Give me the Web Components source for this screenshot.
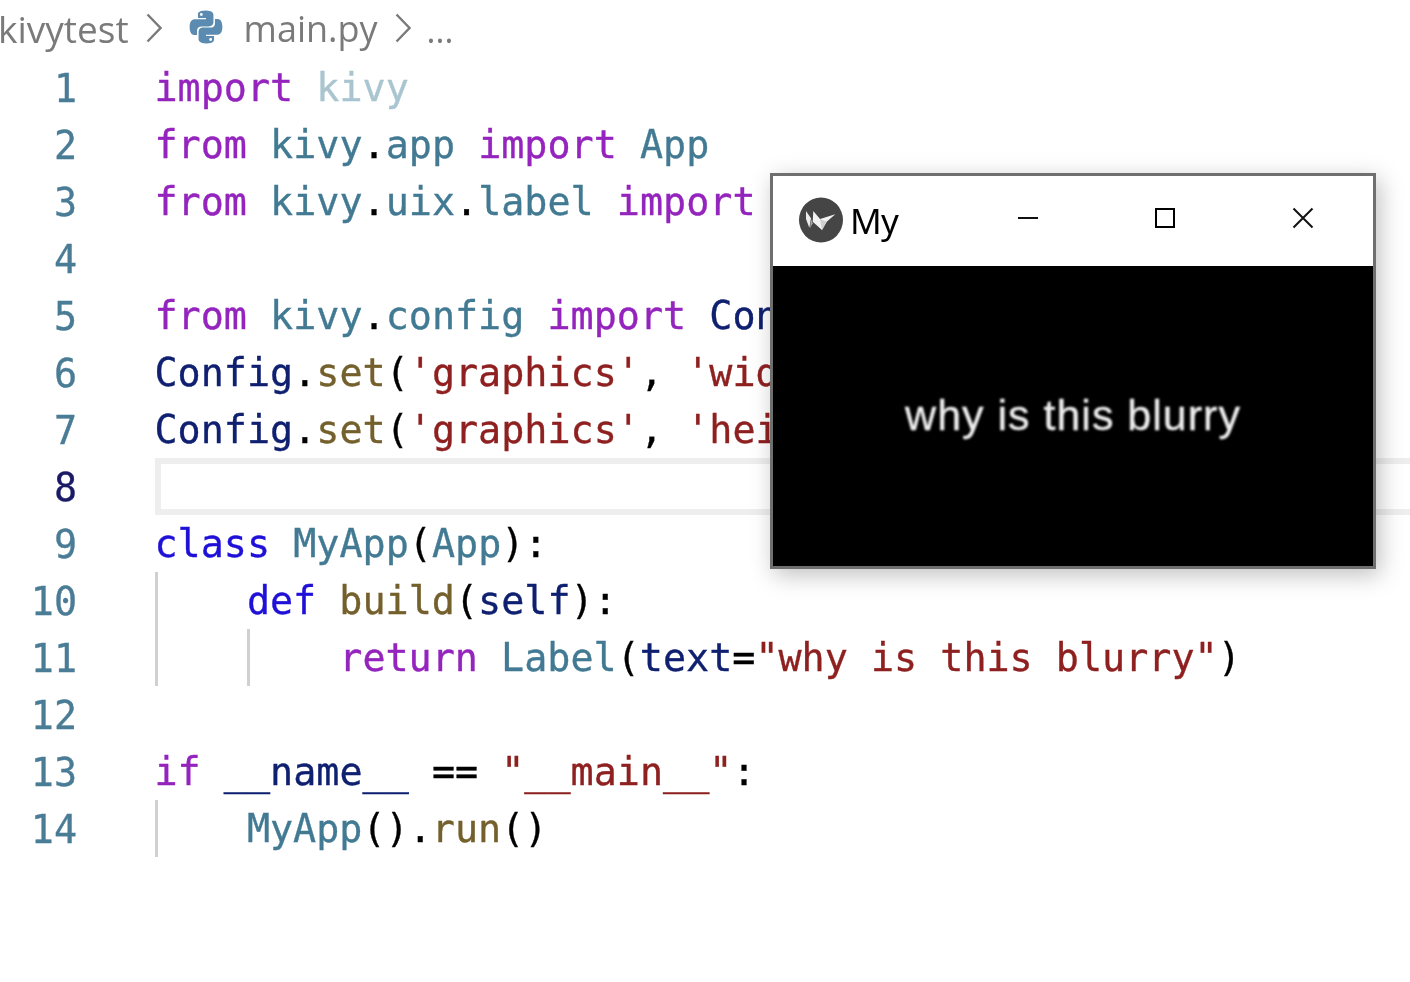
<!DOCTYPE html>
<html>
<head>
<meta charset="utf-8">
<style>
  html, body { margin: 0; height: 100%; background: #fff; overflow: hidden; }
</style>
</head>
<body>
<editor-pane>
  <bread-crumbs slot="crumbs"></bread-crumbs>
  <code-line n="1"><span class="ctrl">import</span> <span class="dim">kivy</span></code-line>
  <code-line n="2"><span class="ctrl">from</span> <span class="cls">kivy</span><span>.</span><span class="cls">app</span> <span class="ctrl">import</span> <span class="cls">App</span></code-line>
  <code-line n="3"><span class="ctrl">from</span> <span class="cls">kivy</span><span>.</span><span class="cls">uix</span><span>.</span><span class="cls">label</span> <span class="ctrl">import</span></code-line>
  <code-line n="4"></code-line>
  <code-line n="5"><span class="ctrl">from</span> <span class="cls">kivy</span><span>.</span><span class="cls">config</span> <span class="ctrl">import</span> <span class="var">Con</span></code-line>
  <code-line n="6"><span class="var">Config</span><span>.</span><span class="fn">set</span><span>(</span><span class="str">'graphics'</span><span>, </span><span class="str">'wid</span></code-line>
  <code-line n="7"><span class="var">Config</span><span>.</span><span class="fn">set</span><span>(</span><span class="str">'graphics'</span><span>, </span><span class="str">'hei</span></code-line>
  <code-line n="8" active></code-line>
  <code-line n="9"><span class="kw">class</span> <span class="cls">MyApp</span><span>(</span><span class="cls">App</span><span>):</span></code-line>
  <code-line n="10" indent="1" guides="1"><span class="kw">def</span> <span class="fn">build</span><span>(</span><span class="var">self</span><span>):</span></code-line>
  <code-line n="11" indent="2" guides="2"><span class="ctrl">return</span> <span class="cls">Label</span><span>(</span><span class="var">text</span><span>=</span><span class="str">"why is this blurry"</span><span>)</span></code-line>
  <code-line n="12"></code-line>
  <code-line n="13"><span class="ctrl">if</span> <span class="var">__name__</span> <span>==</span> <span class="str">"__main__"</span><span>:</span></code-line>
  <code-line n="14" indent="1" guides="1"><span class="cls">MyApp</span><span>().</span><span class="fn">run</span><span>()</span></code-line>
</editor-pane>
<app-window caption="My" label="why is this blurry"></app-window>

<script>
const lineTemplate = document.createElement('template');
lineTemplate.innerHTML = `
  <style>
    :host {
      display: flex;
      height: 57px;
      font-family: "DejaVu Sans Mono", "Liberation Mono", monospace;
      font-size: 38.4px;
      line-height: 57px;
      color: #000;
      -webkit-text-stroke: 0.35px;
    }
    .num {
      width: 77px;
      flex: none;
      text-align: right;
      color: #4a7c96;
      line-height: 59px;
    }
    :host([active]) .num { color: #1a1a66; }
    .gap { width: 78px; flex: none; }
    .body {
      flex: 1;
      display: flex;
      white-space: pre;
      box-sizing: border-box;
    }
    :host([active]) .body {
      border: 6px solid #eeeeee;
      border-right: none;
    }
    .text { margin-left: -0.5px; }
    .tab { flex: none; width: 92.4px; }
    .tab.guide { box-shadow: inset 3px 0 0 #d0d0d0; }
    ::slotted(.ctrl) { color: #9424bd; }
    ::slotted(.kw) { color: #1f10d8; }
    ::slotted(.cls) { color: #427a93; }
    ::slotted(.dim) { color: #a9c5d0; }
    ::slotted(.var) { color: #0f2070; }
    ::slotted(.fn) { color: #74602c; }
    ::slotted(.str) { color: #8f2020; }
  </style>
  <div class="num"></div>
  <div class="gap"></div>
  <div class="body"><span class="tabs" style="display:flex"></span><div class="text"><slot></slot></div></div>
`;

class CodeLine extends HTMLElement {
  connectedCallback() {
    const root = this.attachShadow({ mode: 'open' });
    root.appendChild(lineTemplate.content.cloneNode(true));
    root.querySelector('.num').textContent = this.getAttribute('n');
    const indent = Number(this.getAttribute('indent') || 0);
    const guides = Number(this.getAttribute('guides') || 0);
    const tabs = root.querySelector('.tabs');
    for (let i = 0; i < indent; i++) {
      const tab = document.createElement('div');
      tab.className = i < guides ? 'tab guide' : 'tab';
      tabs.appendChild(tab);
    }
  }
}
customElements.define('code-line', CodeLine);

const crumbsTemplate = document.createElement('template');
crumbsTemplate.innerHTML = `
  <style>
    :host {
      display: flex;
      align-items: center;
      height: 57px;
      padding-bottom: 2px;
      font-family: "Open Sans", "Noto Sans", sans-serif;
      font-size: 36px;
      color: #7a7a7a;
      filter: blur(0.3px);
    }
    svg { flex: none; display: block; }
    .chev { margin-top: -2px; }
    .name { white-space: nowrap; }
  </style>
  <span class="name" style="margin-left:-2px;font-size:37px">kivytest</span>
  <svg class="chev" style="margin-left:17px" width="16" height="30" viewBox="0 0 16 30" fill="none" stroke="#7a7a7a" stroke-width="2.4"><path d="M1.500 1.500 L14.500 15 L1.500 28.500"/></svg>
  <svg style="margin-left:27px;margin-top:-4px" width="34" height="34" viewBox="0 0 110 110">
    <path fill="#5b8bb0" d="M54 2c-27 0-25 12-25 12v12h26v4H19S2 28 2 55s15 26 15 26h9V68s-1-15 14-15h25s14 0 14-14V16S81 2 54 2zM40 10a4.700 4.700 0 1 1 0 9.400 4.700 4.700 0 0 1 0-9.400z"/>
    <path fill="#5b8bb0" d="M56 108c27 0 25-12 25-12V84H55v-4h36s17 2 17-25-15-26-15-26h-9v13s1 15-14 15H45s-14 0-14 14v23s-2 14 25 14zm14-8a4.700 4.700 0 1 1 0-9.400 4.700 4.700 0 0 1 0 9.400z"/>
  </svg>
  <span class="name" style="margin-left:21px">main.py</span>
  <svg class="chev" style="margin-left:17px" width="16" height="30" viewBox="0 0 16 30" fill="none" stroke="#7a7a7a" stroke-width="2.4"><path d="M1.500 1.500 L14.500 15 L1.500 28.500"/></svg>
  <span class="name" style="margin-left:16px;font-size:34px;margin-top:2px">...</span>
`;

class BreadCrumbs extends HTMLElement {
  connectedCallback() {
    this.attachShadow({ mode: 'open' }).appendChild(crumbsTemplate.content.cloneNode(true));
  }
}
customElements.define('bread-crumbs', BreadCrumbs);

const paneTemplate = document.createElement('template');
paneTemplate.innerHTML = `
  <style>
    :host { display: block; filter: blur(0.3px); }
  </style>
  <slot name="crumbs"></slot>
  <slot></slot>
`;

class EditorPane extends HTMLElement {
  connectedCallback() {
    this.attachShadow({ mode: 'open' }).appendChild(paneTemplate.content.cloneNode(true));
  }
}
customElements.define('editor-pane', EditorPane);

const windowTemplate = document.createElement('template');
windowTemplate.innerHTML = `
  <style>
    :host {
      position: absolute;
      left: 770px;
      top: 173px;
      width: 600px;
      border: 3px solid #6f6f6f;
      background: #fff;
      box-shadow: 4px 6px 22px rgba(0, 0, 0, 0.25);
    }
    .title {
      display: flex;
      align-items: center;
      height: 90px;
      box-sizing: border-box;
      padding-left: 26px;
      padding-right: 1px;
      font-family: "Noto Sans", "Open Sans", sans-serif;
      font-size: 35px;
      color: #000;
      filter: blur(0.25px);
    }
    .logo { flex: none; display: block; margin-top: -2px; }
    .cap { margin-left: 7px; flex: 1; margin-top: -1px; letter-spacing: -0.8px; }
    .btn {
      flex: none;
      width: 137.5px;
      height: 90px;
      display: flex;
      align-items: center;
      justify-content: center;
      margin-top: -6px;
    }
    .screen {
      height: 300px;
      background: #000;
      display: flex;
      align-items: center;
      justify-content: center;
    }
    .label {
      font-family: "Liberation Sans", Roboto, sans-serif;
      font-size: 43px;
      letter-spacing: 1px;
      color: #eeeeee;
      filter: blur(0.8px);
      -webkit-text-stroke: 0.4px #eeeeee;
      white-space: nowrap;
      margin-top: -2px;
    }
  </style>
  <div class="title">
    <svg class="logo" width="44" height="46" viewBox="0 0 44 46">
      <ellipse cx="22" cy="23" rx="22" ry="22.500" fill="#454545"/>
      <path fill="#ececec" d="M7 14 L12 21.300 L10.300 30.700 L7 22 Z"/>
      <path fill="#a8a8a8" d="M12 22 L13.700 26.300 L11 31.300 Z"/>
      <path fill="#f2f2f2" d="M14.300 14 L21 22 L36.300 17.300 L27.700 24.700 L23 33 L13.700 24.700 Z"/>
      <path fill="#cfcfcf" d="M21 22 L27.700 24.700 L23 33 Z"/>
    </svg>
    <span class="cap"></span>
    <div class="btn"><svg width="23" height="22" fill="none" stroke="#111" stroke-width="2"><path d="M1 11 H21"/></svg></div>
    <div class="btn"><svg width="22" height="22" fill="none" stroke="#000" stroke-width="2"><rect x="1" y="2" width="18" height="18"/></svg></div>
    <div class="btn"><svg width="22" height="22" fill="none" stroke="#111" stroke-width="2"><path d="M1.500 1.500 L20.500 20.500 M20.500 1.500 L1.500 20.500"/></svg></div>
  </div>
  <div class="screen"><span class="label"></span></div>
`;

class AppWindow extends HTMLElement {
  connectedCallback() {
    const root = this.attachShadow({ mode: 'open' });
    root.appendChild(windowTemplate.content.cloneNode(true));
    root.querySelector('.cap').textContent = this.getAttribute('caption');
    root.querySelector('.label').textContent = this.getAttribute('label');
  }
}
customElements.define('app-window', AppWindow);
</script>
</body>
</html>
